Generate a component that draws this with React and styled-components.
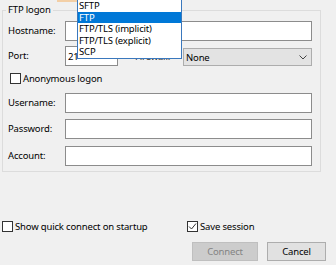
import React from 'react';
import styled, { createGlobalStyle } from 'styled-components';

const GlobalStyle = createGlobalStyle`
  html, body {
    margin: 0;
    padding: 0;
    background: #f0f0f0;
  }
  body {
    font-family: "Noto Sans", "Open Sans", sans-serif;
    font-size: 9.5px;
    letter-spacing: -0.16px;
    color: #000;
  }
`;

const protocols = ['SFTP', 'FTP', 'FTP/TLS (implicit)', 'FTP/TLS (explicit)', 'SCP'];

function App() {
  return (
    <>
      <GlobalStyle />
      <Page>
        <TabIconScrap />
        <GroupBox>
          <Legend>FTP logon</Legend>

          <Row $mt={4}>
            <Label>Hostname:</Label>
            <TextInput readOnly value="" />
          </Row>

          <Row $mt={5}>
            <Label>Port:</Label>
            <PortInput readOnly value="21" />
            <FirewallLabel>Firewall:</FirewallLabel>
            <Select>
              <span>None</span>
              <svg width="8" height="5" viewBox="0 0 8 5">
                <path d="M0.5 0.5 L4 4 L7.5 0.5" fill="none" stroke="#444" strokeWidth="1" />
              </svg>
            </Select>
          </Row>

          <CheckRow $mt={7} $indent={2}>
            <CheckBox />
            <CheckText>Anonymous logon</CheckText>
          </CheckRow>

          <Row $mt={9}>
            <Label>Username:</Label>
            <TextInput readOnly value="" />
          </Row>
          <Row $mt={6}>
            <Label>Password:</Label>
            <TextInput readOnly value="" />
          </Row>
          <Row $mt={7}>
            <Label>Account:</Label>
            <TextInput readOnly value="" />
          </Row>
        </GroupBox>

        <Options>
          <CheckRow>
            <CheckBox />
            <CheckText>Show quick connect on startup</CheckText>
          </CheckRow>
          <CheckRow>
            <CheckBox>
              <svg width="9" height="9" viewBox="0 0 9 9">
                <path d="M1 4.5 L3.5 7 L8 1.5" fill="none" stroke="#333" strokeWidth="1" />
              </svg>
            </CheckBox>
            <CheckText>Save session</CheckText>
          </CheckRow>
        </Options>

        <ButtonRow>
          <Button $width={66} disabled>Connect</Button>
          <Button $width={59}>Cancel</Button>
        </ButtonRow>

        <DropList>
          {protocols.map((p) => (
            <DropItem key={p} $selected={p === 'FTP'}>{p}</DropItem>
          ))}
        </DropList>
      </Page>
    </>
  );
}

const Page = styled.div`
  position: relative;
  width: 336px;
  height: 265px;
  overflow: hidden;
  box-sizing: border-box;
  padding: 3px 10px 0 2px;
  background: #f0f0f0;
`;

// bit of the tab icon above, clipped by the window edge
const TabIconScrap = styled.span`
  position: absolute;
  left: 57px;
  top: 0;
  width: 20px;
  height: 2px;
  background: #f3cfa6;
`;

const GroupBox = styled.fieldset`
  width: 319px;
  box-sizing: border-box;
  margin: 0;
  padding: 0 8px 5px 5px;
  border: 1px solid #dcdcdc;
  min-inline-size: 0;
`;

const Legend = styled.legend`
  padding: 0 2px;
  margin-left: -2px;
  line-height: 14px;
`;

const Row = styled.div`
  display: flex;
  align-items: center;
  height: 20px;
  margin-top: ${(p) => p.$mt || 0}px;
`;

const Label = styled.span`
  flex: none;
  width: 57px;
  line-height: 14px;
`;

const TextInput = styled.input`
  flex: 1;
  min-width: 0;
  height: 20px;
  box-sizing: border-box;
  margin: 0;
  padding: 0 2px;
  border: 1px solid #8c8c8c;
  background: #fff;
  font: inherit;
  letter-spacing: inherit;
  color: #000;
  outline: none;
`;

const PortInput = styled(TextInput)`
  flex: none;
  width: 53px;
`;

const FirewallLabel = styled.span`
  margin-left: 17px;
  color: #333;
`;

const Select = styled.div`
  margin-left: auto;
  align-self: flex-end;
  width: 129px;
  height: 18px;
  box-sizing: border-box;
  display: flex;
  align-items: center;
  justify-content: space-between;
  padding: 0 4px 0 2px;
  border: 1px solid #adadad;
  background: #e3e3e3;

  svg {
    margin-top: 1px;
  }
`;

const CheckRow = styled.div`
  display: flex;
  align-items: center;
  height: 11px;
  margin-top: ${(p) => p.$mt || 0}px;
  padding-left: ${(p) => p.$indent || 0}px;
`;

const CheckBox = styled.span`
  flex: none;
  width: 11px;
  height: 11px;
  box-sizing: border-box;
  display: flex;
  align-items: center;
  justify-content: center;
  border: 1px solid #333;
  background: #fff;
`;

const CheckText = styled.span`
  margin-left: 2px;
  line-height: 14px;
  white-space: nowrap;
`;

const Options = styled.div`
  display: grid;
  grid-template-columns: 185px auto;
  margin-top: 49px;
`;

const ButtonRow = styled.div`
  display: flex;
  justify-content: flex-end;
  gap: 9px;
  margin-top: 10px;
`;

const Button = styled.button`
  width: ${(p) => p.$width}px;
  height: 19px;
  box-sizing: border-box;
  margin: 0;
  padding: 0;
  border: 1px solid #adadad;
  background: #e1e1e1;
  font: inherit;
  letter-spacing: inherit;
  color: #000;

  &:disabled {
    border-color: #bfbfbf;
    background: #cccccc;
    color: #838383;
  }
`;

const DropList = styled.div`
  position: absolute;
  left: 77px;
  top: -1px;
  width: 105px;
  box-sizing: border-box;
  border: 1px solid #3a78bd;
  background: #fff;
`;

const DropItem = styled.div`
  height: 11.6px;
  line-height: 11.6px;
  padding-left: 1px;
  white-space: nowrap;
  background: ${(p) => (p.$selected ? '#0078d7' : 'transparent')};
  color: ${(p) => (p.$selected ? '#fff' : '#000')};
`;

export default App;
